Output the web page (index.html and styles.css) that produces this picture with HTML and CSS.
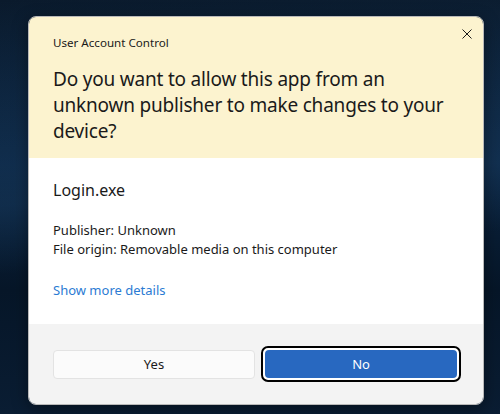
FILE: index.html
```html
<!DOCTYPE html>
<html lang="en">
<head>
<meta charset="utf-8">
<title>User Account Control</title>
<link rel="stylesheet" href="styles.css">
</head>
<body>
<div class="desktop">
  <div class="dialog">
    <div class="header">
      <div class="title-row">
        <div class="app-title">User Account Control</div>
        <button class="close" aria-label="Close">
          <svg width="10" height="10" viewBox="0 0 10 10"><path d="M0.5 0.5 L9.5 9.5 M9.5 0.5 L0.5 9.5" stroke="#1a1a1a" stroke-width="1" fill="none"/></svg>
        </button>
      </div>
      <h1 class="question">Do you want to allow this app from an unknown publisher to make changes to your device?</h1>
    </div>
    <div class="body">
      <div class="app-name">Login.exe</div>
      <div class="info">
        <div>Publisher: Unknown</div>
        <div>File origin: Removable media on this computer</div>
      </div>
      <a class="details" href="#">Show more details</a>
    </div>
    <div class="footer">
      <button class="btn btn-yes">Yes</button>
      <button class="btn btn-no"><span class="btn-no-inner">No</span></button>
    </div>
  </div>
</div>
</body>
</html>
```

FILE: styles.css
```css
* { box-sizing: border-box; }
html, body { margin: 0; padding: 0; }
body {
  width: 500px;
  height: 414px;
  overflow: hidden;
  font-family: "Noto Sans", "Open Sans", "DejaVu Sans", sans-serif;
  background:
    linear-gradient(175deg, rgba(40,80,120,0.0) 0%, rgba(30,70,110,0.35) 45%, rgba(0,0,0,0) 60%),
    linear-gradient(180deg, #0a1a2c 0%, #0b2440 40%, #061628 70%, #0a1d33 100%);
}
.desktop {
  padding: 16px 0 0 28px;
}
.dialog {
  width: 456px;
  height: 389px;
  border-radius: 8px;
  overflow: hidden;
  border: 1px solid #b9b9b9;
  display: flex;
  flex-direction: column;
  box-shadow: 0 4px 16px rgba(0,0,0,0.4);
}
.header {
  background: #fcf3cf;
  padding: 0 0 0 24px;
  height: 141px;
}
.title-row {
  display: flex;
  justify-content: space-between;
  align-items: flex-start;
}
.app-title {
  font-size: 11.6px;
  color: #1a1a1a;
  padding-top: 18px;
  line-height: 16px;
}
.close {
  border: 0;
  background: transparent;
  padding: 0;
  margin: 12px 11px 0 0;
  width: 10px;
  height: 10px;
  display: flex;
}
.question {
  margin: 15px 0 0 0;
  max-width: 400px;
  font-weight: normal;
  font-size: 19px;
  letter-spacing: -0.2px;
  line-height: 26px;
  color: #1a1a1a;
}
.body {
  background: #ffffff;
  flex: 1;
  padding: 21px 24px 0 24px;
}
.app-name {
  font-size: 16px;
  line-height: 22px;
  color: #1a1a1a;
}
.info {
  margin-top: 20px;
  font-size: 13px;
  line-height: 19px;
  color: #1a1a1a;
}
.details {
  display: block;
  margin-top: 22px;
  font-size: 13px;
  line-height: 19px;
  color: #2b7bd3;
  text-decoration: none;
}
.footer {
  background: #f3f3f3;
  height: 80px;
  display: flex;
  align-items: center;
  gap: 6px;
  padding: 0 22px 0 24px;
}
.btn {
  font-family: inherit;
  font-size: 13px;
  cursor: pointer;
}
.btn-yes {
  width: 202px;
  height: 29px;
  background: #fbfbfb;
  border: 1px solid #e3e3e3;
  border-radius: 4px;
  color: #1a1a1a;
}
.btn-no {
  width: 200px;
  height: 36px;
  padding: 2px;
  border: 2px solid #000;
  border-radius: 7px;
  background: #fff;
  display: flex;
}
.btn-no-inner {
  flex: 1;
  background: #2868c0;
  color: #fff;
  border-radius: 4px;
  display: flex;
  align-items: center;
  justify-content: center;
}
```
